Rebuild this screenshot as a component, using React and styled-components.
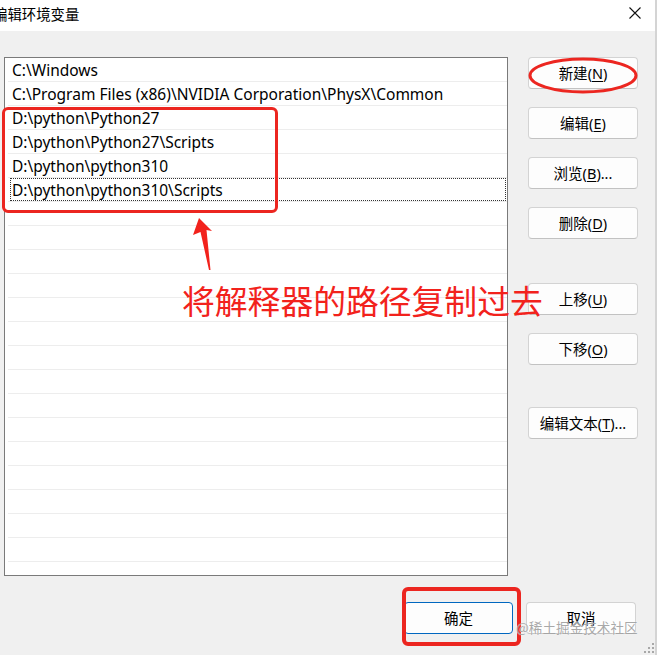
import React from 'react';
import styled, { createGlobalStyle } from 'styled-components';

const GlobalStyle = createGlobalStyle`
  html, body {
    margin: 0;
    padding: 0;
    background: #f0f0f0;
  }
  * {
    box-sizing: border-box;
  }
`;

const cjk = `"Noto Sans", "Noto Sans CJK SC", sans-serif`;

const Window = styled.div`
  position: relative;
  width: 657px;
  height: 655px;
  overflow: hidden;
  background: #f0f0f0;
  border-right: 2px solid #d4d4d4;
  font-family: ${cjk};
  color: #000;
`;

const TitleBar = styled.div`
  height: 31px;
  background: #fff;
  display: flex;
  align-items: center;
  justify-content: space-between;
  padding: 0 14px 2px 0;
`;

const Title = styled.div`
  margin-left: -7px;
  font-size: 14.4px;
  line-height: 20px;
`;

const CloseIcon = styled.svg`
  width: 12px;
  height: 12px;
  margin-bottom: 3px;
`;

const Body = styled.div`
  display: flex;
  padding: 26px 0 0 4px;
  gap: 20px;
`;

const ListBox = styled.div`
  width: 504px;
  height: 519px;
  background: #fff;
  border: 1px solid #7a7a7a;
  overflow: hidden;
`;

const Row = styled.div`
  height: 24px;
  margin-left: 3px;
  border-bottom: 1px solid #ededed;
  display: flex;
`;

const RowText = styled.div`
  flex: 1;
  height: 23px;
  padding-left: 1px;
  font-size: 15.5px;
  line-height: 22px;
  white-space: nowrap;
  border: 1px dotted ${(p) => (p.$focused ? '#333' : 'transparent')};
  margin-left: 2px;
  margin-right: 1px;
`;

const ButtonColumn = styled.div`
  display: flex;
  flex-direction: column;
  width: 110px;
`;

const Button = styled.div`
  width: ${(p) => p.$w || 110}px;
  height: 32px;
  margin-top: ${(p) => p.$top || 0}px;
  background: #fdfdfd;
  border: 1px solid ${(p) => (p.$primary ? '#0067c0' : '#d3d3d3')};
  border-bottom-color: ${(p) => (p.$primary ? '#0067c0' : '#c2c2c2')};
  border-radius: 4px;
  display: flex;
  align-items: center;
  justify-content: center;
  font-size: 14.5px;
  line-height: 20px;
  padding-bottom: 1px;

  u {
    text-underline-offset: 2px;
  }
`;

const Footer = styled.div`
  display: flex;
  justify-content: flex-end;
  gap: 13px;
  padding: 26px 19px 0 0;
`;

const RedBox = styled.div`
  position: absolute;
  left: ${(p) => p.$x}px;
  top: ${(p) => p.$y}px;
  width: ${(p) => p.$w}px;
  height: ${(p) => p.$h}px;
  border: ${(p) => p.$t || 3}px solid #ec2620;
  border-radius: 6px;
`;

const Drawing = styled.svg`
  position: absolute;
  left: 0;
  top: 0;
  width: 657px;
  height: 655px;
  pointer-events: none;
`;

const Note = styled.div`
  position: absolute;
  left: 182px;
  top: 280px;
  font-family: "Noto Sans CJK SC", sans-serif;
  font-size: 32.8px;
  line-height: 40px;
  color: #f2221c;
  white-space: nowrap;
`;

const Watermark = styled.div`
  position: absolute;
  left: 516px;
  top: 617px;
  font-family: "Noto Sans CJK SC", sans-serif;
  font-size: 13.6px;
  line-height: 20px;
  color: rgba(140, 140, 140, 0.75);
  text-shadow: 0 0 1px #fff;
  white-space: nowrap;
`;

const paths = [
  'C:\\Windows',
  'C:\\Program Files (x86)\\NVIDIA Corporation\\PhysX\\Common',
  'D:\\python\\Python27',
  'D:\\python\\Python27\\Scripts',
  'D:\\python\\python310',
  'D:\\python\\python310\\Scripts',
];

const rows = Array.from({ length: 22 }, (_, i) => paths[i] || '');

const buttons = [
  { label: '新建', key: 'N', top: 0 },
  { label: '编辑', key: 'E', top: 18 },
  { label: '浏览', key: 'B', top: 18, more: true },
  { label: '删除', key: 'D', top: 18 },
  { label: '上移', key: 'U', top: 44 },
  { label: '下移', key: 'O', top: 18 },
  { label: '编辑文本', key: 'T', top: 42, more: true },
];

const App = () => {
  return (
    <Window>
      <GlobalStyle />
      <TitleBar>
        <Title>编辑环境变量</Title>
        <CloseIcon viewBox="0 0 12 12">
          <path d="M0.5 0.5 L11.5 11.5 M11.5 0.5 L0.5 11.5" stroke="#111" strokeWidth="1.1" />
        </CloseIcon>
      </TitleBar>

      <Body>
        <ListBox>
          {rows.map((text, i) => (
            <Row key={i}>
              <RowText $focused={i === 5}>{text}</RowText>
            </Row>
          ))}
        </ListBox>
        <ButtonColumn>
          {buttons.map((b) => (
            <Button key={b.key} $top={b.top}>
              {b.label}(<u>{b.key}</u>){b.more ? '...' : ''}
            </Button>
          ))}
        </ButtonColumn>
      </Body>

      <Footer>
        <Button $primary $w={109}>确定</Button>
        <Button>取消</Button>
      </Footer>

      <RedBox $x={2} $y={107} $w={276} $h={106} />
      <RedBox $x={402} $y={587} $w={119} $h={59} $t={4} />
      <Watermark>@稀土掘金技术社区</Watermark>
      <Note>将解释器的路径复制过去</Note>

      <Drawing viewBox="0 0 657 655">
        <ellipse cx="583" cy="75.5" rx="53" ry="16.5" fill="none" stroke="#ec2620" strokeWidth="3" />
        <polygon
          points="199,218 212,231 206.5,230 210.5,270 209,270 200.5,232 193,235"
          fill="#f2221c"
        />
        <g fill="#a8a8a8">
          <rect x="652" y="643" width="2" height="2" />
          <rect x="648" y="647" width="2" height="2" />
          <rect x="652" y="647" width="2" height="2" />
          <rect x="644" y="651" width="2" height="2" />
          <rect x="648" y="651" width="2" height="2" />
          <rect x="652" y="651" width="2" height="2" />
        </g>
      </Drawing>
    </Window>
  );
};

export default App;
